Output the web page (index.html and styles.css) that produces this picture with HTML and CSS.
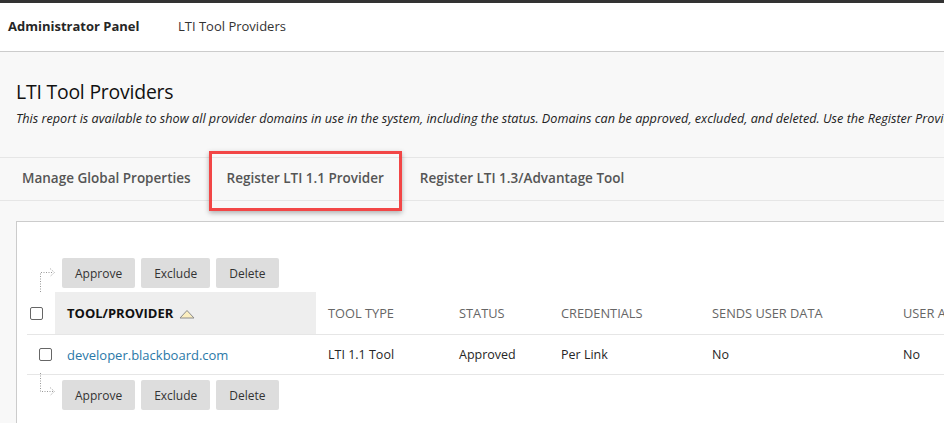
FILE: index.html
```html
<!DOCTYPE html>
<html lang="en">
<head>
    <meta charset="UTF-8">
    <meta name="viewport" content="width=device-width, initial-scale=1.0">
    <title>LTI Tool Providers</title>
    <link rel="stylesheet" href="styles.css">
</head>
<body>
    <div class="topbar"></div>

    <header class="crumbs">
        <span class="crumb-root">Administrator Panel</span>
        <span class="crumb">LTI Tool Providers</span>
    </header>

    <main class="page">
        <h1>LTI Tool Providers</h1>
        <p class="desc">This report is available to show all provider domains in use in the system, including the status. Domains can be approved, excluded, and deleted. Use the Register Provider Domain button to add a new domain.</p>

        <nav class="tabs">
            <a class="tab">Manage Global Properties</a>
            <a class="tab tab-marked">Register LTI 1.1 Provider</a>
            <a class="tab">Register LTI 1.3/Advantage Tool</a>
        </nav>

        <section class="panel">
            <div class="actions">
                <svg class="arrow" width="22" height="34" viewBox="0 0 22 34">
                    <path d="M2.5 34 V14.5 H15" />
                    <path d="M12 10.5 L16.5 14.5 L12 18.5" />
                </svg>
                <button>Approve</button>
                <button>Exclude</button>
                <button>Delete</button>
            </div>

            <table class="grid">
                <thead>
                    <tr>
                        <th class="col-check"><span class="check"></span></th>
                        <th class="col-name sorted">TOOL/PROVIDER
                            <svg class="sort" width="16" height="10" viewBox="0 0 16 10">
                                <path d="M1 9 L8 1.5 L15 9 Z" />
                            </svg>
                        </th>
                        <th class="col-type">TOOL TYPE</th>
                        <th class="col-status">STATUS</th>
                        <th class="col-cred">CREDENTIALS</th>
                        <th class="col-sends">SENDS USER DATA</th>
                        <th class="col-user">USER ACCEPTANCE</th>
                    </tr>
                </thead>
                <tbody>
                    <tr>
                        <td class="col-check"><span class="check check-row"></span></td>
                        <td><a class="link">developer.blackboard.com</a></td>
                        <td>LTI 1.1 Tool</td>
                        <td>Approved</td>
                        <td>Per Link</td>
                        <td>No</td>
                        <td>No</td>
                    </tr>
                </tbody>
            </table>

            <div class="actions actions-bottom">
                <svg class="arrow" width="22" height="30" viewBox="0 0 22 30">
                    <path d="M2.5 0 V18.5 H15" />
                    <path d="M12 14.5 L16.5 18.5 L12 22.5" />
                </svg>
                <button>Approve</button>
                <button>Exclude</button>
                <button>Delete</button>
            </div>
        </section>
    </main>
</body>
</html>
```

FILE: styles.css
```css
html, body {
    overflow: hidden;
}
body {
    margin: 0;
    width: 944px;
    height: 423px;
    background-color: #f8f8f8;
    font-family: "Open Sans", Arial, sans-serif;
    color: #333;
}
.topbar {
    height: 3px;
    background-color: #333;
}
.crumbs {
    display: flex;
    align-items: center;
    height: 48px;
    padding-left: 8px;
    background-color: #fff;
    border-bottom: 1px solid #ccc;
    font-size: 13px;
    line-height: 18px;
}
.crumb-root {
    font-weight: 700;
    color: #262626;
    width: 170px;
    margin-top: -2px;
}
.crumb {
    color: #333;
    margin-top: -2px;
}
.page {
    white-space: nowrap;
}
h1 {
    margin: 27px 0 0 16px;
    font-size: 19.4px;
    font-weight: 400;
    color: #111;
    line-height: 26px;
    letter-spacing: -0.2px;
}
.desc {
    margin: 4px 0 0 16px;
    font-size: 12.65px;
    font-style: italic;
    color: #222;
    line-height: 18px;
}
.tabs {
    display: flex;
    margin-top: 30px;
    padding-left: 22px;
    height: 42px;
    align-items: center;
    border-top: 1px solid #e6e6e6;
    border-bottom: 1px solid #e6e6e6;
}
.tab {
    position: relative;
    font-size: 13.5px;
    font-weight: 600;
    color: #555;
    margin-right: 36px;
    margin-top: -2px;
}
.tab-marked::after {
    content: "";
    position: absolute;
    left: -18px;
    right: -18px;
    top: -18px;
    bottom: -24px;
    border: 3px solid #f24646;
    box-shadow: 0 2px 5px rgba(0, 0, 0, 0.3);
}
.panel {
    margin: 20px 0 0 16px;
    width: 1000px;
    height: 220px;
    background-color: #fff;
    border: 1px solid #ccc;
    border-right: none;
    padding-top: 36px;
}
.actions {
    display: flex;
    align-items: flex-end;
    gap: 6px;
    padding-left: 21px;
}
.actions button {
    height: 30px;
    padding: 0 13px;
    background-color: #ddd;
    border: none;
    border-radius: 2px;
    font-family: inherit;
    font-size: 12px;
    color: #333;
}
.arrow {
    align-self: stretch;
    margin-right: -4px;
    fill: none;
    stroke: #999;
    stroke-width: 1;
    stroke-dasharray: 1 1.5;
}
.actions .arrow {
    margin-bottom: -4px;
}
.actions-bottom {
    align-items: flex-start;
}
.actions-bottom .arrow {
    margin-bottom: 0;
    margin-top: -2px;
}
.actions-bottom button {
    margin-top: 5px;
}
.grid {
    width: 1064px;
    margin: 4px 0 0 10px;
    border-collapse: collapse;
    table-layout: fixed;
    font-size: 12.5px;
}
.grid th {
    height: 42px;
    padding: 0 12px;
    text-align: left;
    font-weight: 400;
    font-size: 12.8px;
    color: #666;
    border-bottom: 1px solid #e6e6e6;
}
.grid td {
    height: 39px;
    padding: 0 12px;
    color: #262626;
    border-bottom: 1px solid #e6e6e6;
}
.grid .col-check {
    width: 28px;
    padding: 0;
}
.col-name { width: 237px; }
.col-type { width: 107px; }
.col-status { width: 78px; }
.col-cred { width: 127px; }
.col-sends { width: 167px; }
.col-user { width: 176px; }
.grid th.sorted {
    background-color: #eee;
    color: #111;
    font-weight: 700;
    font-size: 13px;
}
.sort {
    margin-left: 2px;
    vertical-align: -1px;
    fill: #fbeec0;
    stroke: #8c8c8c;
    stroke-width: 1;
}
.check {
    display: block;
    box-sizing: border-box;
    width: 13px;
    height: 13px;
    margin-left: 3px;
    border: 1px solid #666;
    border-radius: 2px;
    background-color: #fff;
}
.check-row {
    margin-left: 12px;
}
.link {
    color: #2a78a8;
    font-size: 13px;
}
```
